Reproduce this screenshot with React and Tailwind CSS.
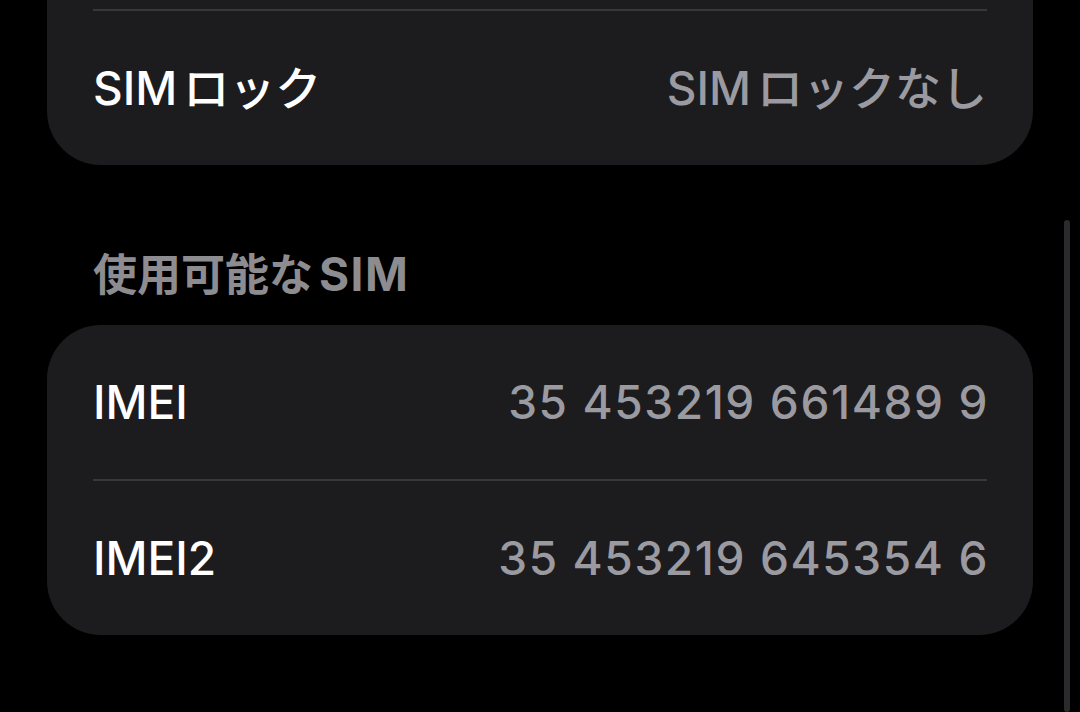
const font = { fontFamily: 'Inter, "Noto Sans CJK JP", sans-serif' };

function Row({ label, value, mono }) {
  return (
    <div className="h-[154px] flex items-center justify-between px-[46px]">
      <span className="text-[46px] font-medium text-white leading-none">{label}</span>
      <span
        className={
          mono
            ? 'text-[46px] font-medium text-[#9a9aa0] leading-none tracking-[1.6px] -mr-[2px]'
            : 'text-[46px] font-medium text-[#9a9aa0] leading-none'
        }
      >
        {value}
      </span>
    </div>
  );
}

function Divider() {
  return <div className="mx-[46px] h-[2px] bg-[#38383b]" />;
}

export default function App() {
  return (
    <div
      className="relative w-[1080px] h-[712px] bg-black overflow-hidden"
      style={font}
    >
      <div className="px-[47px]">
        {/* card continuing from above */}
        <div className="-mt-[145px] bg-[#1c1c1e] rounded-[54px]">
          <div className="h-[154px]" />
          <Divider />
          <Row
            label={<>SIM<span className="ml-[6px]">ロック</span></>}
            value={<>SIM<span className="ml-[6px]">ロックなし</span></>}
          />
        </div>

        {/* section header */}
        <div className="h-[160px] flex items-end px-[46px] pb-[28px]">
          <span className="text-[44px] font-bold text-[#8c8c91] leading-none">
            使用可能な<span className="ml-[6px] text-[46px] tracking-[1.5px]">SIM</span>
          </span>
        </div>

        <div className="bg-[#1c1c1e] rounded-[54px]">
          <Row label="IMEI" value="35 453219 661489 9" mono />
          <Divider />
          <Row label="IMEI2" value="35 453219 645354 6" mono />
        </div>
      </div>

      {/* scroll indicator */}
      <div className="absolute right-[10px] top-[220px] bottom-0 w-[6px] rounded-full bg-[#2a2a2c]" />
    </div>
  );
}
